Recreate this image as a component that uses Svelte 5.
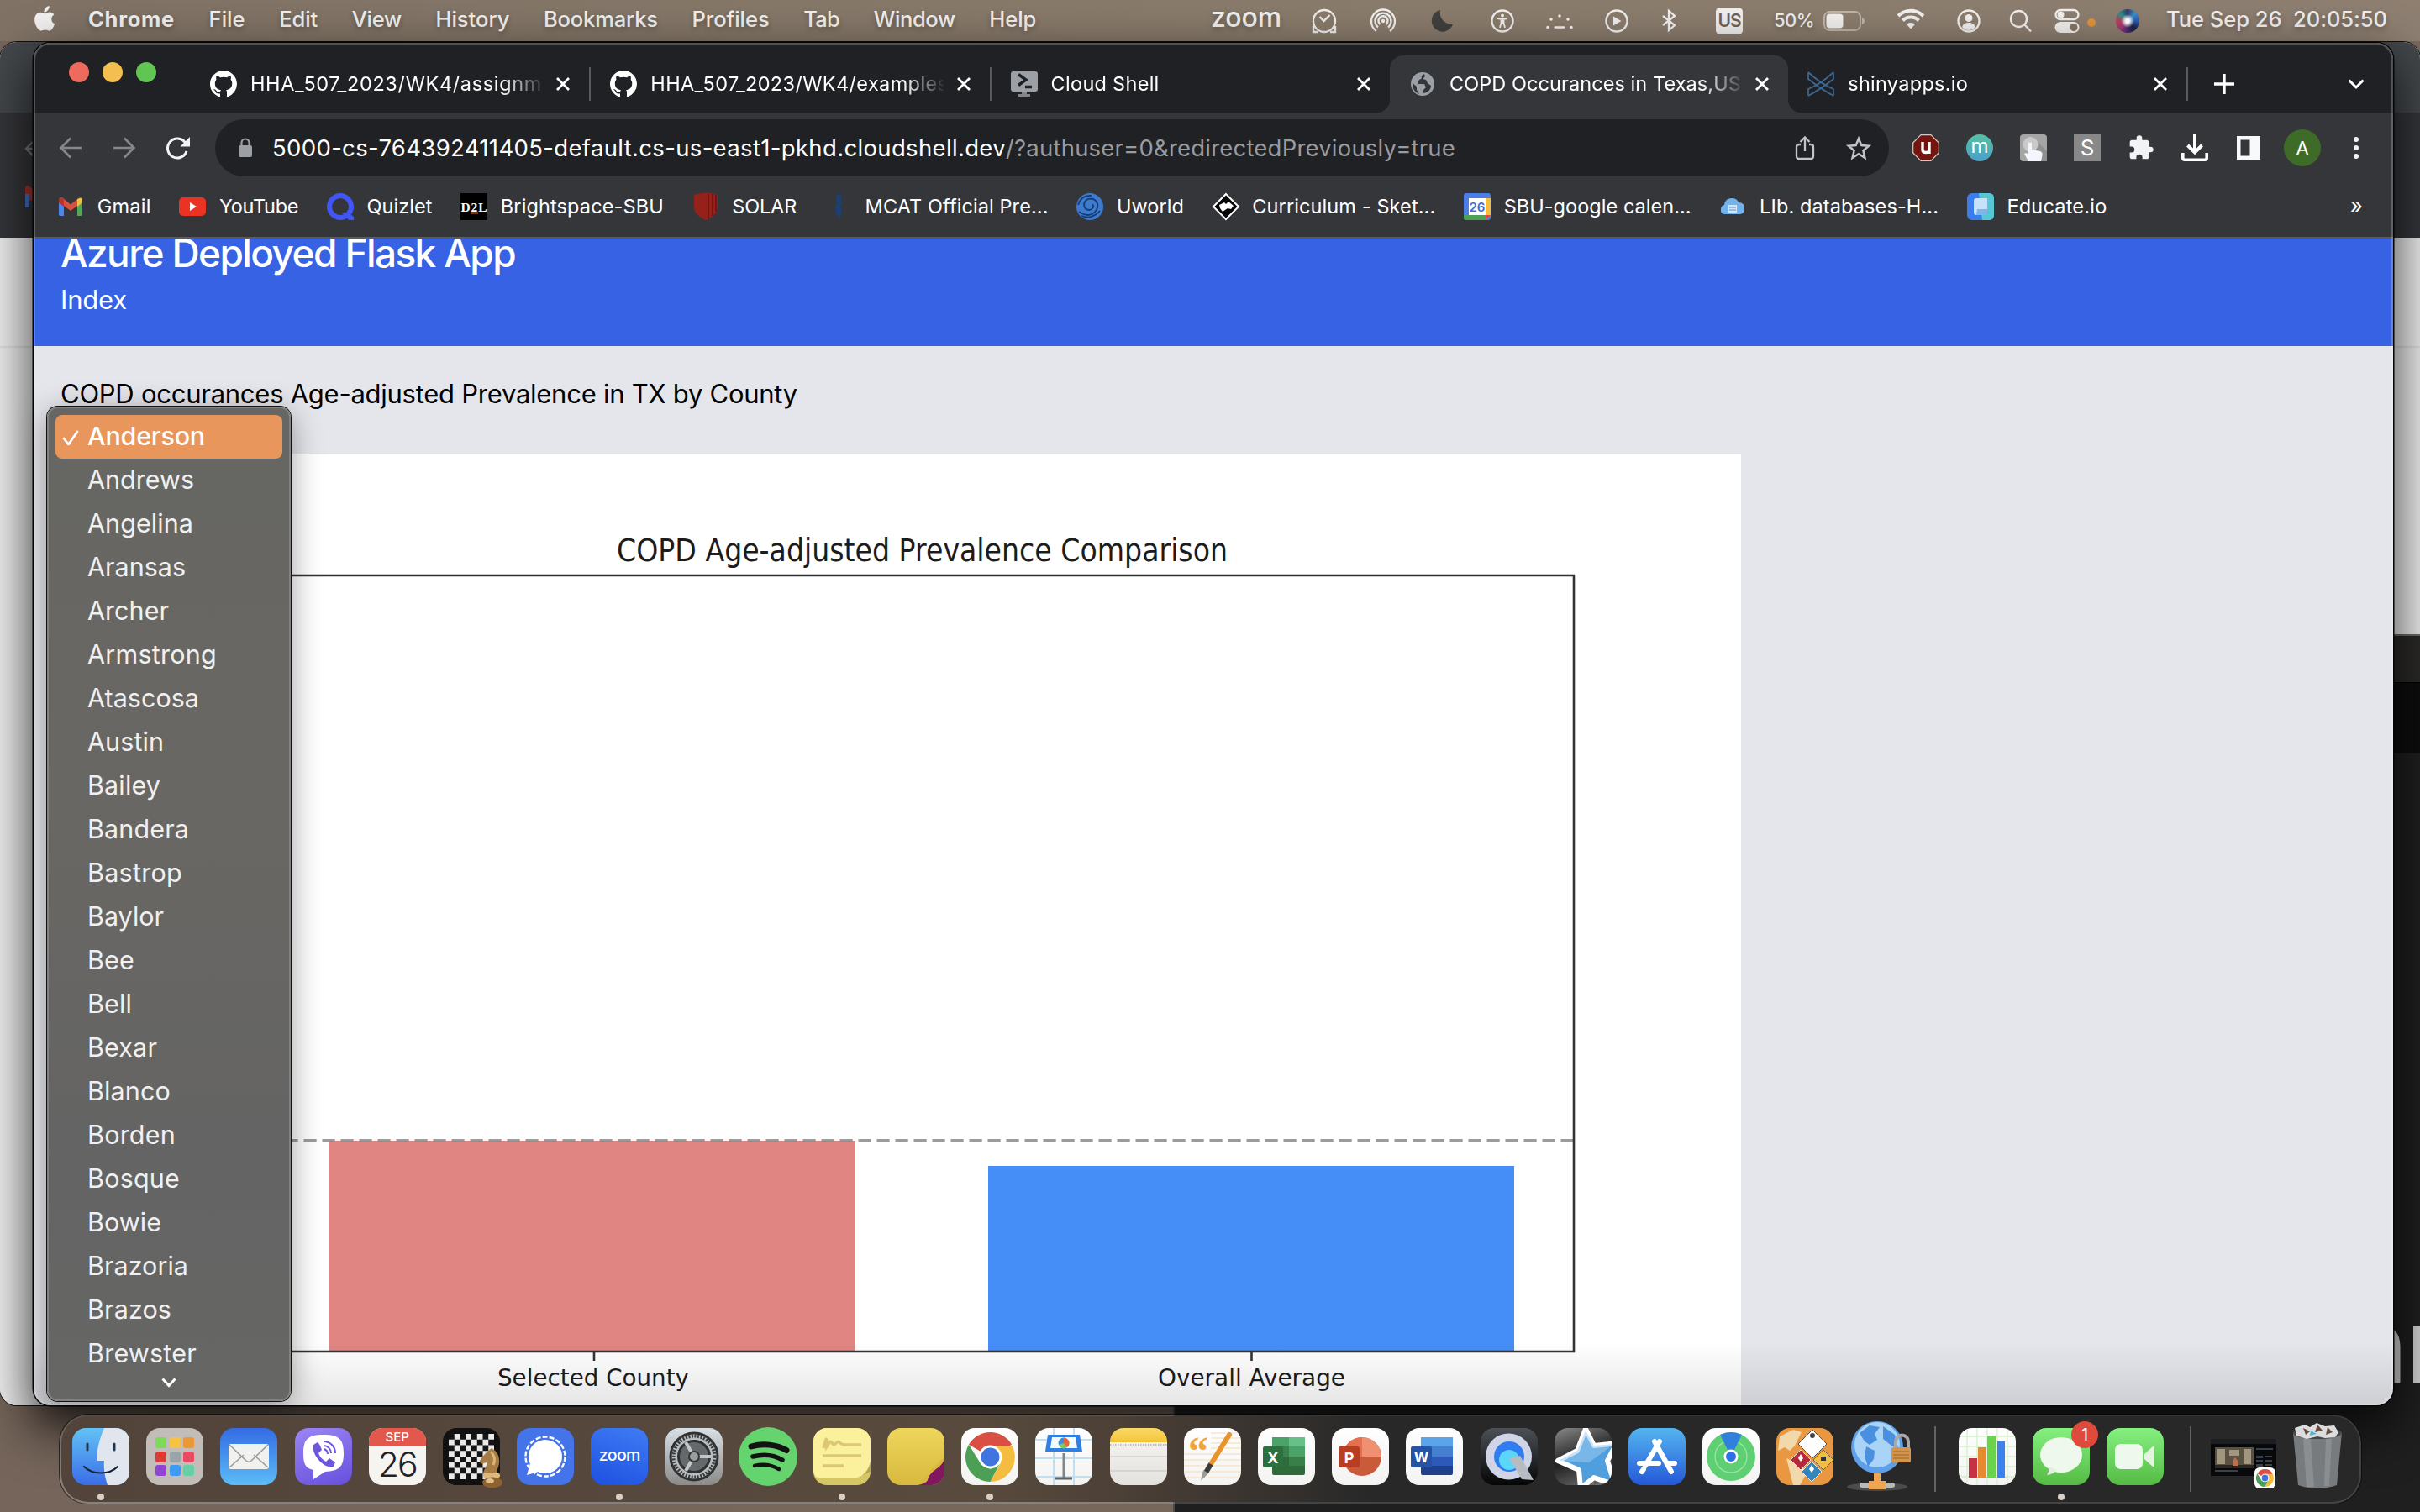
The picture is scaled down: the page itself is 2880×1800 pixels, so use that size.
<script>
  // Tracks a label out (or in) so that it takes exactly `width` pixels.
  function fit(node, width) {
    const natural = node.getBoundingClientRect().width;
    const count = node.textContent.length;
    node.style.letterSpacing = `${(width - natural) / count}px`;
  }

  const menus = [
    ['File', 43], ['Edit', 46], ['View', 59], ['History', 88], ['Bookmarks', 136],
    ['Profiles', 92], ['Tab', 43], ['Window', 97], ['Help', 56]
  ];

  const counties = [
    ['Anderson', 140], ['Andrews', 127], ['Angelina', 126], ['Aransas', 117], ['Archer', 97],
    ['Armstrong', 154], ['Atascosa', 133], ['Austin', 91], ['Bailey', 87], ['Bandera', 121],
    ['Bastrop', 113], ['Baylor', 91], ['Bee', 56], ['Bell', 53], ['Bexar', 83], ['Blanco', 99],
    ['Borden', 105], ['Bosque', 110], ['Bowie', 88], ['Brazoria', 120], ['Brazos', 100],
    ['Brewster', 130]
  ];
</script>

{#snippet github()}
  <svg class="i32" viewBox="0 0 16 16"><path fill="#fff" d="M8 0C3.58 0 0 3.58 0 8c0 3.54 2.29 6.53 5.47 7.59.4.07.55-.17.55-.38 0-.19-.01-.82-.01-1.49-2.01.37-2.53-.49-2.69-.94-.09-.23-.48-.94-.82-1.13-.28-.15-.68-.52-.01-.53.63-.01 1.08.58 1.23.82.72 1.21 1.87.87 2.33.66.07-.52.28-.87.51-1.07-1.78-.2-3.64-.89-3.64-3.95 0-.87.31-1.59.82-2.15-.08-.2-.36-1.02.08-2.12 0 0 .67-.21 2.2.82.64-.18 1.32-.27 2-.27s1.36.09 2 .27c1.53-1.04 2.2-.82 2.2-.82.44 1.1.16 1.92.08 2.12.51.56.82 1.27.82 2.15 0 3.07-1.87 3.75-3.65 3.95.29.25.54.73.54 1.48 0 1.07-.01 1.93-.01 2.2 0 .21.15.46.55.38A8.01 8.01 0 0 0 16 8c0-4.42-3.58-8-8-8z"/></svg>
{/snippet}
{#snippet shell()}
  <svg class="i32" viewBox="0 0 32 32"><rect x="0" y="1" width="32" height="24" rx="3" fill="#9aa0a6"/><path d="M9 4.500l9 6.500-9 6.500M17 19.500h8" stroke="#202124" stroke-width="3.400" fill="none"/><path d="M13 25h6v3h4v3H9v-3h4z" fill="#80868b"/></svg>
{/snippet}
{#snippet globe()}
  <svg class="i32" viewBox="0 0 32 32"><circle cx="16" cy="16" r="14" fill="#9aa0a6"/><path d="M18 4c-3 1-4 3-3 5l-4 3v4h7l2 4-3 3v4c6-1 9-5 9-9l-4-3-2-4-4-1 3-3zM4 15l5 4v4l3 5C7 26 4 22 4 15z" fill="#35363a"/></svg>
{/snippet}
{#snippet shiny()}
  <svg class="i32" viewBox="0 0 32 32"><g fill="none" stroke="#3c6790" stroke-width="1.800"><path d="M1 2v8q15 12 30 20M31 2v8Q16 22 1 30M1 2q15 14 30 20v8M31 2Q16 16 1 22v8"/></g></svg>
{/snippet}
{#snippet cross()}
  <svg class="close" viewBox="0 0 16 16"><path d="M1 1l14 14M15 1L1 15" stroke="#fff" stroke-width="2.800"/></svg>
{/snippet}
{#snippet chromeLogo()}
  <svg viewBox="0 0 48 48"><path d="M24 24L3.200 12A24 24 0 0 1 44.800 12z" fill="#d94f43"/><path d="M24 13h21.200a24 24 0 0 1-21.200 35l10-18z" fill="#f4bd40"/><path d="M3.200 12L14.500 30l9.500 5.500L33 31 24 48A24 24 0 0 1 3.200 12z" fill="#4d9f55"/><circle cx="24" cy="24" r="11.300" fill="#fff"/><circle cx="24" cy="24" r="8.900" fill="#4274e0"/></svg>
{/snippet}

{#snippet finder()}
  <div class="app b-finder"><svg viewBox="0 0 68 68"><path d="M38 0c-6 14-9 26-9 39h9c-1 10 1 20 4 29h26V0z" fill="#e1e6ee"/><path d="M18 19v7M50 19v7" stroke="#22364d" stroke-width="3" stroke-linecap="round"/><path d="M14 46c10 10 30 10 40 0" stroke="#17243a" stroke-width="2.200" fill="none" stroke-linecap="round"/></svg></div>
{/snippet}
{#snippet launchpad()}
  <div class="app b-launch">
    {#each ['#7edb58', '#f6c342', '#ec9836', '#dc3c31', '#9ba4a9', '#e94b60', '#9243d3', '#3e9bf2', '#67cfa4'] as c}<i style:background={c}></i>{/each}
  </div>
{/snippet}
{#snippet mail()}
  <div class="app b-mail"><svg viewBox="0 0 68 68"><rect x="10" y="19" width="48" height="30" rx="3" fill="#f1f1ef"/><path d="M11 47l17-15M57 47L40 32M11 20l20 19q3 2.500 6 0l20-19" stroke="#9a9a98" stroke-width="1.600" fill="none"/></svg></div>
{/snippet}
{#snippet viber()}
  <div class="app b-viber"><svg viewBox="0 0 68 68"><path d="M34 8c18 0 24 5 24 22s-6 21-22 22L22 61V50C12 48 10 42 10 30 10 13 16 8 34 8z" fill="#fff"/><path d="M22 20l5-3q2 1 5 9l-4 4c2 5 5 8 9 10l4-4 7 5-2 5c-10 4-27-14-24-26z" fill="#6d57da"/><path d="M34 16c8 0 14 6 14 14M34 21c5 0 9 4 9 9M34 25q5 1 5 6" fill="none" stroke="#6d57da" stroke-width="2"/></svg></div>
{/snippet}
{#snippet calendar()}
  <div class="app b-cal"><div class="month">SEP</div><div class="day">26</div></div>
{/snippet}
{#snippet chess()}
  <div class="app b-chess"><div class="board"></div><svg class="over" viewBox="0 0 68 68"><path d="M58 24c-4 3-10 8-14 15l1 4 7-2c1 6-4 8-4 14h16c0-6 4-10 3-18-1-7-4-10-9-13z" fill="#a67b45"/><path d="M57 28c4 4 6 10 3 16" stroke="#dcb676" stroke-width="3" fill="none"/><rect x="48" y="54" width="20" height="5" rx="2" fill="#dfb97a"/><ellipse cx="59" cy="65" rx="12" ry="6.500" fill="#8d6230"/><ellipse cx="56" cy="63" rx="5" ry="3" fill="#e2c08a"/></svg></div>
{/snippet}
{#snippet signal()}
  <div class="app b-signal"><svg viewBox="0 0 68 68"><circle cx="34" cy="34" r="23.500" fill="none" stroke="#fff" stroke-width="2.400" stroke-dasharray="6 2.200"/><circle cx="34" cy="34" r="20" fill="#fff"/><path d="M16 42l-4 14 14-4z" fill="#fff"/></svg></div>
{/snippet}
{#snippet zoom()}
  <div class="app b-zoom"><span use:fit={49}>zoom</span></div>
{/snippet}
{#snippet settings()}
  <div class="app b-set"><svg viewBox="0 0 68 68"><circle cx="34" cy="34" r="28" fill="#b9bdbf" stroke="#2f3132" stroke-width="3"/><circle cx="34" cy="34" r="24.500" fill="none" stroke="#3a3c3d" stroke-width="4" stroke-dasharray="2 1.600"/><circle cx="34" cy="34" r="18.500" fill="#66696b" stroke="#2f3132" stroke-width="3"/><path d="M34 34L24 17M34 34h20M34 34L24 51" stroke="#c3c7c9" stroke-width="4"/><circle cx="34" cy="34" r="6" fill="#9a9ea0" stroke="#333" stroke-width="2"/></svg></div>
{/snippet}
{#snippet spotify()}
  <div class="app"><svg viewBox="0 0 68 68"><circle cx="34" cy="34" r="35" fill="#65d46e"/><g fill="none" stroke="#121212" stroke-linecap="round"><path d="M14 22c14-4 30-2.500 42 4.500" stroke-width="7"/><path d="M16 34c12-3 25-2 35 4" stroke-width="5.500"/><path d="M18 45c10-2.500 20-1.500 29 4" stroke-width="4.500"/></g></svg></div>
{/snippet}
{#snippet stickies()}
  <div class="app b-stick"><svg viewBox="0 0 68 68"><path d="M0 0h68v40q-3 14-16 20H10Q0 60 0 50z" fill="#fbf19d"/><path d="M68 40q-3 16-18 20l18-8z" fill="#b5a552"/><path d="M12 24c4-16 4-12 4-2 4-6 4-8 7-3 3 4 4-5 8-2 3 4 6 3 26 3M11 33h46M11 45h25" fill="none" stroke="#dac873" stroke-width="3.500"/></svg></div>
{/snippet}
{#snippet note()}
  <div class="app b-note"><svg viewBox="0 0 68 68"><path d="M68 36C64 50 52 48 48 62q-2 4-12 6h32z" fill="#80175f"/><path d="M68 34C64 50 52 48 48 60q-2 6-14 8 14-8 18-19 5-3 16-15z" fill="#d8b840"/></svg></div>
{/snippet}
{#snippet chrome()}
  <div class="app b-white"><div class="logo58">{@render chromeLogo()}</div></div>
{/snippet}
{#snippet keynote()}
  <div class="app b-white"><svg viewBox="0 0 68 68"><path d="M0 14h68M0 36h68M0 58h68M22 0v68M46 0v68" stroke="#bfe0f3" stroke-width="2"/><path d="M15 8h38l3 20H12z" fill="#2f7fe4"/><path d="M20 11h28l2 13H18z" fill="#f5f9fc"/><circle cx="34" cy="18" r="6.500" fill="#86c552"/><path d="M34 18v-6.500a6.500 6.500 0 0 1 4 11.500z" fill="#e5673e"/><path d="M34 18v-6.500a6.500 6.500 0 0 0-6 8z" fill="#3b8de8"/><path d="M34 30v29" stroke="#82878c" stroke-width="3"/><path d="M24 60h20" stroke="#5e6368" stroke-width="3"/></svg></div>
{/snippet}
{#snippet notes()}
  <div class="app b-notes"><svg viewBox="0 0 68 68"><path d="M0 20h68" stroke="#8e8a80" stroke-width="1" stroke-dasharray="1.500 1.500"/><path d="M0 34h68M0 51h68" stroke="#cfcfcb" stroke-width="1.500"/></svg></div>
{/snippet}
{#snippet pages()}
  <div class="app b-white"><svg viewBox="0 0 68 68"><path d="M32 6h36M32 12h36M32 18h36M32 24h36M0 31h68M0 38h68M0 45h68M0 52h68M0 59h68" stroke="#f6d9b2" stroke-width="1.200"/><text x="5" y="44" font-size="48" font-family="Liberation Serif, serif" font-weight="700" fill="#f2a43c">“</text><path d="M54 8L32 43" stroke="#e8932c" stroke-width="6" stroke-linecap="round"/><path d="M32 43l-6 10" stroke="#3c3c3c" stroke-width="6"/><path d="M23 50l6 4-9 9z" fill="#9b9b9b"/></svg></div>
{/snippet}
{#snippet excel()}
  <div class="app b-white"><svg viewBox="0 0 68 68"><rect x="17" y="11" width="39" height="45" rx="2" fill="#2f6a3b"/><path d="M17 11h20v11H17z" fill="#4ca369"/><path d="M37 11h19v11H37z" fill="#66c088"/><path d="M17 22h20v12H17z" fill="#3b8150"/><path d="M37 22h19v12H37z" fill="#4ca369"/><path d="M37 34h19v11H37z" fill="#397f4a"/><rect x="6" y="22" width="24" height="25" rx="2" fill="#2c7040"/><text x="18" y="41.500" text-anchor="middle" font-size="18" font-weight="700" fill="#fff">X</text></svg></div>
{/snippet}
{#snippet powerpoint()}
  <div class="app b-white"><svg viewBox="0 0 68 68"><circle cx="36" cy="34" r="23" fill="#c95a3a"/><path d="M36 11a23 23 0 0 1 23 23H36z" fill="#ef9072"/><path d="M36 11a23 23 0 0 0-23 23h23z" fill="#e4704f"/><rect x="8" y="22" width="25" height="25" rx="2" fill="#b73e23"/><text x="20.500" y="41.500" text-anchor="middle" font-size="18" font-weight="700" fill="#fff">P</text></svg></div>
{/snippet}
{#snippet word()}
  <div class="app b-white"><svg viewBox="0 0 68 68"><rect x="18" y="11" width="38" height="45" rx="2" fill="#21408b"/><path d="M18 11h38v11H18z" fill="#5ba4ea"/><path d="M18 22h38v12H18z" fill="#4580d0"/><path d="M18 34h38v11H18z" fill="#2d5ab8"/><rect x="6" y="22" width="25" height="25" rx="2" fill="#2453a8"/><text x="18.500" y="41" text-anchor="middle" font-size="17" font-weight="700" fill="#fff">W</text></svg></div>
{/snippet}
{#snippet quicktime()}
  <div class="app b-qt"><svg viewBox="0 0 68 68"><circle cx="33.500" cy="34" r="27.500" fill="#cfd5e6"/><circle cx="34" cy="34" r="18" fill="#2f7df0"/><circle cx="34" cy="38" r="12" fill="#5ad6f8"/><path d="M34 36l13-3 16 29-14-1z" fill="#b7bbc2"/></svg></div>
{/snippet}
{#snippet anki()}
  <div class="app b-anki"><svg viewBox="0 0 68 68"><path d="M37 1l10 20 27-3-11 21 9 29-25-9-16 13-2-22L4 39l23-12z" fill="#4f9fde" stroke="#fff" stroke-width="6" stroke-linejoin="round"/><path d="M37 3l10 18 24-2-30 22-36-2 22-12z" fill="#9ccbf0" opacity=".55"/></svg></div>
{/snippet}
{#snippet appstore()}
  <div class="app b-store"><svg viewBox="0 0 68 68"><g stroke="#fff" stroke-width="6" stroke-linecap="round"><path d="M37 16L20 45M31 16l20 36M13 42h23M47 42h8M18 49l-2 3"/></g></svg></div>
{/snippet}
{#snippet findmy()}
  <div class="app b-white"><svg viewBox="0 0 68 68"><circle cx="34" cy="34" r="29" fill="#5fcf73"/><circle cx="34" cy="34" r="19" fill="none" stroke="#98e6a4" stroke-width="1.300"/><path d="M34 34L21 8q13-6 26 0z" fill="#2f81dc"/><circle cx="34" cy="34" r="8.500" fill="#fff"/><circle cx="34" cy="34" r="6" fill="#2f6fe8"/></svg></div>
{/snippet}
{#snippet hazmat()}
  <div class="app b-haz"><svg viewBox="0 0 68 68"><path d="M4 10l16-8 10 3-8 16-6 6-6-4-8 4zM12 36l18 8 6 10-8 14H20z" fill="#f2d9ab"/><path d="M43 2l17 17-17 17-17-17z" fill="#fdfdfd" stroke="#555"/><path d="M29 26l12 12-12 12-12-12z" fill="#b52a3a" stroke="#fff" stroke-width=".8"/><path d="M56 26l12 12-12 12-12-12z" fill="#f0bd47" stroke="#555" stroke-width=".8"/><path d="M42 40l12 12-12 12-12-12z" fill="#3585bc" stroke="#fff" stroke-width=".8"/><circle cx="43" cy="9" r="3" fill="#444"/><path d="M29 31l3 5-3 4-3-4zM42 44l3 5-3 4-3-4z" fill="#fff"/><path d="M53 34h6v5h-6z" fill="#333"/></svg></div>
{/snippet}
{#snippet vpn()}
  <div class="app"><svg viewBox="0 0 68 68"><ellipse cx="31" cy="70" rx="36" ry="5" fill="#777" opacity=".45"/><circle cx="31" cy="23" r="31" fill="#5d9fe8"/><circle cx="31" cy="20" r="27" fill="#a9d4f8"/><path d="M10 6l12-9 12 2-6 8 3 7-9 6-6-4zM18 22l10 5-1 10-7 9-4-12zM38-2l14 10 4 16-8-3-10-8z" fill="#4a90e0"/><rect x="10" y="65" width="42" height="6" rx="3" fill="#b9b9b9"/><path d="M27 54h8v9h6v10H21V63h6z" fill="#f2a550"/><path d="M53 24v-8a7.500 7.500 0 0 1 15 0v8" fill="none" stroke="#a9a9a9" stroke-width="4"/><rect x="48" y="23" width="23" height="18" rx="2" fill="#d3954c"/><path d="M50 28h19M50 32h19M50 36h19" stroke="#9b6526"/></svg></div>
{/snippet}
{#snippet numbers()}
  <div class="app b-white"><svg viewBox="0 0 68 68"><path d="M0 10h68M0 22h68M0 34h68M0 46h68M0 58h68M10 0v68M22 0v68M34 0v68M46 0v68M58 0v68" stroke="#d3f0cb" stroke-width="1.300"/><path d="M12 36h10v23H12z" fill="#c43344"/><path d="M23 23h10v36H23z" fill="#e58a31"/><path d="M34 9h10v50H34z" fill="#69d34b"/><path d="M46 16h9v43h-9z" fill="#3d82ea"/></svg></div>
{/snippet}
{#snippet messages()}
  <div class="app b-green"><svg viewBox="0 0 68 68"><ellipse cx="34" cy="32" rx="25" ry="21" fill="#eef8ec"/><path d="M19 46q1 6-2 10 8-1 12-6z" fill="#dff2dc"/></svg><b class="badge">1</b></div>
{/snippet}
{#snippet facetime()}
  <div class="app b-green"><svg viewBox="0 0 68 68"><rect x="10" y="19" width="33" height="30" rx="7" fill="#eef8ec"/><path d="M45 31l10-9q2-1 2 1v22q0 2-2 1l-10-9z" fill="#e3f4e0"/></svg></div>
{/snippet}

<div class="desktop">
  <div class="window back"><div class="b-tabs"></div><div class="b-bar">
    <svg viewBox="0 0 40 148"><path d="M44 43H32m8-9l-9 9 9 9" fill="none" stroke="#77787b" stroke-width="2.400"/><path d="M30 104V90q1-8 10 3v12z" fill="#a8332b"/><path d="M30 97h5v16h-5z" fill="#4672c4"/></svg>
  </div><div class="b-page"></div></div>
  <div class="window terminal"><div class="t-title"></div><div class="t-tabs"></div><div class="t-body"><span>nr</span></div></div>

  <header class="menubar">
    <svg class="apple" viewBox="0 0 24 30"><path fill="#f2f0ee" d="M17.500 0c.2 2-.7 3.900-1.800 5.200-1.100 1.400-2.700 2.300-4.200 2.200-.3-1.900.6-3.800 1.700-5C14.300 1.100 16.100.1 17.500 0zM23 10.200c-2 1.300-3 2.900-3 5.100 0 2.500 1.500 4.500 3.700 5.400-.9 2.700-3.500 8-6.200 8-1.600 0-2.400-1-4.700-1s-3.200 1-4.700 1C4.800 28.700.5 21.700.5 16c0-5.500 3.400-8.500 6.800-8.500 2.200 0 3.800 1.400 5.200 1.400 1.300 0 3.300-1.600 5.800-1.600 1.800 0 3.600.9 4.700 2.900z"/></svg>
    <nav>
      <b use:fit={103}>Chrome</b>
      {#each menus as [name, w]}<span use:fit={w}>{name}</span>{/each}
    </nav>
    <div class="status">
      <span class="zoomword"><span use:fit={84}>zoom</span></span>
      <svg viewBox="0 0 30 30"><circle cx="15" cy="15" r="13" class="ln"/><path d="M9.500 10l5 5 7-7M2 21v7h6M28 21v7h-6" class="ln"/></svg>
      <svg viewBox="0 0 30 30"><g class="ln"><path d="M7 27A14 14 0 1 1 23 27M9 22.500a9.500 9.500 0 1 1 12 0M11.500 19a5.500 5.500 0 1 1 7 0"/></g><circle cx="15" cy="15" r="2.200" class="fl"/></svg>
      <svg viewBox="0 0 30 30"><path d="M12 2a14 14 0 0 0 15 17A13 13 0 1 1 12 2z" fill="#40403f"/></svg>
      <svg viewBox="0 0 30 30"><circle cx="15" cy="15" r="12.500" class="ln"/><circle cx="15" cy="8.500" r="1.900" class="fl"/><path d="M9 12l6 1 6-1M15 13v5m-3 5l1.500-6V13h3v4l1.500 6" class="ln thin"/></svg>
      <svg viewBox="0 0 30 30"><g class="fl"><circle cx="15" cy="9" r="1.800"/><circle cx="5" cy="13" r="1.800"/><circle cx="25" cy="13" r="1.800"/><circle cx="1" cy="22.500" r="1.800"/><circle cx="29" cy="22.500" r="1.800"/><rect x="8.500" y="21.200" width="13" height="2.600" rx="1.300"/></g></svg>
      <svg viewBox="0 0 30 30"><circle cx="15" cy="15" r="12.500" class="ln"/><path d="M11 9.500v11l9.500-5.500z" class="fl"/></svg>
      <svg viewBox="0 0 30 30"><path d="M8 9l14 11-7 6V3l7 6L8 20" class="ln"/></svg>
      <span class="us">US</span>
      <span class="pct"><span use:fit={48}>50%</span></span>
      <svg class="batt" viewBox="0 0 50 24"><rect x="1" y="1" width="43" height="22" rx="6.500" fill="none" stroke="#bdb4aa" stroke-width="2"/><rect x="3.500" y="3.500" width="20" height="17" rx="4" class="fl"/><path d="M46 8q3 1 3 4t-3 4z" fill="#bdb4aa"/></svg>
      <svg class="wifi" viewBox="0 0 34 26"><path d="M2 9a21 21 0 0 1 30 0M7.500 14.500a13.500 13.500 0 0 1 19 0" fill="none" stroke="#f2f0ee" stroke-width="4"/><path d="M12 19a7 7 0 0 1 10 0l-5 5.500z" class="fl"/></svg>
      <svg viewBox="0 0 30 30"><circle cx="15" cy="15" r="12.500" class="ln"/><circle cx="15" cy="11.500" r="4.500" class="fl"/><path d="M7 22q2-5 8-5t8 5q-3 4-8 4t-8-4z" class="fl"/></svg>
      <svg viewBox="0 0 30 30"><circle cx="12.500" cy="12.500" r="9.500" class="ln"/><path d="M19.500 19.500l7.500 8" class="ln"/></svg>
      <svg viewBox="0 0 30 30"><rect x="1.500" y="2" width="27" height="11" rx="5.500" class="ln"/><circle cx="7.500" cy="7.500" r="4" class="fl"/><rect x="0.500" y="16" width="29" height="13" rx="6.500" class="fl"/><circle cx="23" cy="22.500" r="4.500" fill="#857767"/></svg>
      <i class="orange"></i>
      <i class="siri"></i>
      <span class="date"><span use:fit={263}>Tue Sep 26  20:05:50</span></span>
    </div>
  </header>

  <main class="window front">
    <div class="tabstrip">
      <div class="lights"><i class="r"></i><i class="y"></i><i class="g"></i></div>
      <div class="tab">{@render github()}<div class="title"><span use:fit={347}>HHA_507_2023/WK4/assignm</span></div>{@render cross()}</div>
      <i class="sep"></i>
      <div class="tab">{@render github()}<div class="title"><span use:fit={354}>HHA_507_2023/WK4/examples</span></div>{@render cross()}</div>
      <i class="sep"></i>
      <div class="tab">{@render shell()}<div class="title"><span use:fit={129}>Cloud Shell</span></div>{@render cross()}</div>
      <div class="tab active">{@render globe()}<div class="title"><span use:fit={347}>COPD Occurances in Texas,US</span></div>{@render cross()}</div>
      <div class="tab">{@render shiny()}<div class="title"><span use:fit={143}>shinyapps.io</span></div>{@render cross()}</div>
      <i class="sep"></i>
      <svg class="plus" viewBox="0 0 24 24"><path d="M12 0v24M0 12h24" stroke="#fff" stroke-width="3.400"/></svg>
      <svg class="chev" viewBox="0 0 20 12"><path d="M1.500 1.500L10 10l8.500-8.500" fill="none" stroke="#fff" stroke-width="3"/></svg>
    </div>

    <div class="toolbar">
      <svg class="i32" viewBox="0 0 32 32"><path d="M29 16H4M16 4.500L4.500 16 16 27.500" fill="none" stroke="#86878a" stroke-width="2.600"/></svg>
      <svg class="i32" viewBox="0 0 32 32"><path d="M3 16h25M16 4.500L27.500 16 16 27.500" fill="none" stroke="#86878a" stroke-width="2.600"/></svg>
      <svg class="i32" viewBox="0 0 32 32"><path d="M26 20a11.500 11.500 0 1 1-1.500-10" fill="none" stroke="#f1f3f4" stroke-width="3"/><path d="M30 3v11.500H18.500z" fill="#f1f3f4"/></svg>
      <div class="omnibox">
        <svg class="i32" viewBox="0 0 32 32"><rect x="8" y="13" width="16" height="14" rx="2" fill="#9aa0a6"/><path d="M11.500 14v-4a4.500 4.500 0 0 1 9 0v4" fill="none" stroke="#9aa0a6" stroke-width="2.200"/></svg>
        <div class="url"><span use:fit={873}>5000-cs-764392411405-default.cs-us-east1-pkhd.cloudshell.dev</span><span class="path" use:fit={535}>/?authuser=0&redirectedPreviously=true</span></div>
        <svg class="i32" viewBox="0 0 32 32"><path d="M11 12H9q-3 0-3 3v11q0 3 3 3h14q3 0 3-3V15q0-3-3-3h-2M16 20V4M10.500 9L16 3.500 21.500 9" fill="none" stroke="#c3c5c7" stroke-width="2.300"/></svg>
        <svg class="i32" viewBox="0 0 32 32"><path d="M16 5l3.300 8 8.700.7-6.600 5.600 2 8.500L16 23.300l-7.400 4.500 2-8.500L4 13.700l8.700-.7z" fill="none" stroke="#c3c5c7" stroke-width="2.500"/></svg>
      </div>
      <svg class="i32 first-ext" viewBox="0 0 32 32"><path d="M10 .7h12L31.300 10v12L22 31.300H10L.7 22V10z" fill="#75150f" stroke="#d8c9c8" stroke-width="1.200"/><path d="M12 9v9.500q0 3 4 3t4-3V9M20 17v6" fill="none" stroke="#fff" stroke-width="3.400"/></svg>
      <div class="ext m">m</div>
      <svg class="i32" viewBox="0 0 32 32"><rect width="32" height="32" rx="4" fill="#a5a5a5"/><path d="M16 4l16 16v12H14z" fill="#8f8f8f"/><circle cx="12.500" cy="12" r="9" fill="#c9c9c9"/><path d="M10 10.500q2-2 4 0V18l10 2q3 1 2.500 5L25 32H10l-5-9q3-2 5 1z" fill="#f3f7fd"/></svg>
      <div class="ext s">S</div>
      <svg class="i32" viewBox="0 0 24 24"><path fill="#f1f3f4" d="M20.500 11H19V7a2 2 0 0 0-2-2h-4V3.500a2.500 2.500 0 0 0-5 0V5H4a2 2 0 0 0-2 2v3.800h1.500a2.700 2.700 0 0 1 0 5.400H2V20c0 1.100.9 2 2 2h3.800v-1.500a2.700 2.700 0 0 1 5.400 0V22H17a2 2 0 0 0 2-2v-4h1.500a2.500 2.500 0 0 0 0-5z"/></svg>
      <svg class="i32" viewBox="0 0 32 32"><path d="M16 0v21M7.500 13l8.500 8.500 8.500-8.500" fill="none" stroke="#fff" stroke-width="4"/><path d="M1.800 22v6q0 2.200 2.200 2.200h24q2.200 0 2.200-2.200v-6" fill="none" stroke="#fff" stroke-width="3.600"/></svg>
      <svg class="i32" viewBox="0 0 32 32"><path d="M2 2h28v28H2zM6.500 6.500v19h11v-19z" fill-rule="evenodd" fill="#f8f9fa"/></svg>
      <div class="avatar">A</div>
      <svg class="i32" viewBox="0 0 32 32"><g fill="#f1f3f4"><circle cx="16" cy="6" r="3"/><circle cx="16" cy="16" r="3"/><circle cx="16" cy="26" r="3"/></g></svg>
    </div>

    <div class="bookmarks">
      <div><svg class="i32" viewBox="0 0 32 32"><path d="M2 9v16q0 2 2 2h4V13z" fill="#4d86ec"/><path d="M30 9v16q0 2-2 2h-4V13z" fill="#56a65a"/><path d="M2 9q0-4 4-4l10 8.500L24 7v8l-8 6-8-6-6-4z" fill="#d9503f"/><path d="M24 7q6-4 6 2v2l-6 5z" fill="#f2be42"/><path d="M2 11V8q1-5 6-1v9z" fill="#b8352b"/></svg><span use:fit={64}>Gmail</span></div>
      <div><svg class="i32" viewBox="0 0 32 32"><rect y="5" width="32" height="22" rx="5" fill="#ea3323"/><path d="M13 11v10l8-5z" fill="#fff"/></svg><span use:fit={94}>YouTube</span></div>
      <div><svg class="i32" viewBox="0 0 32 32"><circle cx="16" cy="16" r="13" fill="none" stroke="#4255f5" stroke-width="6"/><path d="M18 23h7l7 5v4h-6z" fill="#4255f5"/></svg><span use:fit={78}>Quizlet</span></div>
      <div><svg class="i32" viewBox="0 0 32 32"><rect width="32" height="32"/><text x="16" y="22" text-anchor="middle" font-size="15.500" textLength="31" font-family="Liberation Serif, serif" font-weight="700" fill="#fff">D2L</text><path d="M12 23.500h9" stroke="#e07b35" stroke-width="2"/></svg><span use:fit={194}>Brightspace-SBU</span></div>
      <div><svg class="i32" viewBox="0 0 32 32"><path d="M2 2q14-5 28 0v15q0 9-14 15Q2 26 2 17z" fill="#96201a"/><path d="M19 1v29M24 1v26M28 2v20" stroke="#6d100d" stroke-width="1.500"/></svg><span use:fit={77}>SOLAR</span></div>
      <div><svg class="i32" viewBox="0 0 32 32"><path d="M20 0q-8 1-7 6 2 5 0 9t0 9q2 5 5 8-1-5 1-8 2-5-1-9 4-3 1-8-1-4 1-7z" fill="#1c3f74"/></svg><span use:fit={218}>MCAT Official Pre...</span></div>
      <div><svg class="i32" viewBox="0 0 32 32"><circle cx="16" cy="16" r="16" fill="#3c7bd0"/><path d="M3 22q13 9 21-2 4-9-4-13-9-2-11 6 0 7 7 7 6-2 3-7M2 14Q6 2 18 3M6 27q12 5 22-6" fill="none" stroke="#173b6d" stroke-width="1.800"/></svg><span use:fit={80}>Uworld</span></div>
      <div><svg class="i32" viewBox="0 0 32 32"><path d="M16 1l15 15-15 15L1 16z" fill="#050505" stroke="#fff" stroke-width="2"/><path d="M8 14l6-3 2 2 3-3 6 5-3 4-4-1-6 4-3-4z" fill="#fff"/></svg><span use:fit={218}>Curriculum - Sket...</span></div>
      <div><svg class="i32" viewBox="0 0 32 32"><rect width="32" height="32" rx="3" fill="#4d7de8"/><path d="M0 26h26v6H3q-3 0-3-3z" fill="#4ea055"/><path d="M26 6h6v20h-6z" fill="#f2bd42"/><path d="M26 26h6l-6 6z" fill="#dc4c3e"/><rect x="6" y="6" width="20" height="20" fill="#fff"/><text x="16" y="21.500" text-anchor="middle" font-size="15" font-weight="600" fill="#3e6fd6">26</text></svg><span use:fit={223}>SBU-google calen...</span></div>
      <div><svg class="i32" viewBox="0 0 32 32"><path d="M6 25q-5-1-4-6 0-4 4-5 1-8 9-8 6 0 8 5 7 0 7 7 0 6-5 7z" fill="#71b3ea"/><path d="M11 14h10v9H11z" fill="#cfe5fa"/><path d="M12 17h8M12 20h8" stroke="#5795d2"/></svg><span use:fit={213}>LIb. databases-H...</span></div>
      <div><svg class="i32" viewBox="0 0 32 32"><rect width="32" height="32" rx="6" fill="#3b7dea"/><path d="M14 0h12q6 0 6 6v20q0 6-6 6h-8z" fill="#55c8d4"/><path d="M8 9q0-3 3-3h13v20H11q-3 0-3-3z" fill="#c5e2f8"/><path d="M12 19h12v7H11z" fill="#7db5ec"/></svg><span use:fit={119}>Educate.io</span></div>
      <span class="more">»</span>
    </div>

    <section class="page">
      <div class="hero">
        <h1 use:fit={541}>Azure Deployed Flask App</h1>
        <p use:fit={79}>Index</p>
      </div>
      <p class="lead" use:fit={877}>COPD occurances Age-adjusted Prevalence in TX by County</p>
      <svg class="chart" viewBox="72 540 2000 1134">
        <rect x="72" y="540" width="2000" height="1134" fill="#fff"/>
        <g font-family="DejaVu Sans, sans-serif" fill="#1c1c1c">
          <text x="734" y="668" font-size="36.500" textLength="727" lengthAdjust="spacingAndGlyphs">COPD Age-adjusted Prevalence Comparison</text>
          <text x="592" y="1649.500" font-size="28.500" textLength="228" lengthAdjust="spacingAndGlyphs">Selected County</text>
          <text x="1378" y="1649.500" font-size="28.500" textLength="223" lengthAdjust="spacingAndGlyphs">Overall Average</text>
        </g>
        <rect x="392" y="1358" width="626" height="251" fill="#e08581"/>
        <rect x="1176" y="1388" width="626" height="221" fill="#458ef7"/>
        <path d="M333 1358H1873" stroke="#8a8a8a" stroke-opacity=".85" stroke-width="4" stroke-dasharray="15.200 6.800" stroke-dashoffset="-6.500"/>
        <path d="M250 685H1873V1609H250zM707 1609v11M1489.500 1609v11" fill="none" stroke="#333" stroke-width="2.600"/>
      </svg>
      <div class="shade"></div>
    </section>
  </main>

  <ul class="dropdown">
    {#each counties as [name, w], i}
      <li class:on={i === 0}>
        {#if i === 0}<svg viewBox="0 0 20 20"><path d="M2 11l5.500 7L18 3" fill="none" stroke="#fff" stroke-width="2.800" stroke-linecap="round" stroke-linejoin="round"/></svg>{/if}
        <span use:fit={w}>{name}</span>
      </li>
    {/each}
    <svg class="down" viewBox="0 0 18 12"><path d="M1.500 1.500L9 9.500l7.500-8" fill="none" stroke="#fff" stroke-width="3"/></svg>
  </ul>

  <footer class="dock">
    {#each [[finder, 1], [launchpad], [mail], [viber], [calendar], [chess], [signal], [zoom, 1], [settings], [spotify], [stickies, 1], [note], [chrome, 1], [keynote], [notes], [pages], [excel], [powerpoint], [word], [quicktime], [anki], [appstore], [findmy], [hazmat], [vpn]] as [icon, run]}
      <div class="slot" class:run>{@render icon()}</div>
    {/each}
    <i class="bar"></i>
    {#each [[numbers], [messages, 1], [facetime]] as [icon, run]}
      <div class="slot" class:run>{@render icon()}</div>
    {/each}
    <i class="bar last"></i>
    <div class="mini">
      <svg viewBox="0 0 78 44"><rect width="78" height="44" fill="#08090b"/><path d="M0 0h78v6H0z" fill="#1d1e21"/><path d="M5 10h46v25H5z" fill="#5b5142"/><path d="M8 12h9v18H8zM39 12h9v18h-9zM22 13h12v7H22z" fill="#a1977f"/><path d="M5 31h46v4H5z" fill="#2c2620"/><path d="M26 26l3-4 3 4v6h-6z" fill="#c06f4c"/><path d="M54 11h20v2H54zM54 20h8v3h-8zM54 25h8v3h-8zM54 30h8v3h-8z" fill="#38404f"/><path d="M64 21h9M64 26h9M64 31h9M5 38h28" stroke="#778"/></svg>
      <div class="tiny">{@render chromeLogo()}</div>
    </div>
    <svg class="trash" viewBox="0 0 60 78"><path d="M1 10h58l-6 63q-23 8-46 0z" fill="#777b7e"/><path d="M13 18h9l4 57H17zM40 18h7l-3 56h-6z" fill="#9da1a4" opacity=".5"/><ellipse cx="30" cy="11" rx="29" ry="7" fill="#44484b"/><path d="M5 14L3 5l12-4 6 3 8-5 10 4 11-1 5 8-4 6-12 1-9-2-13 3z" fill="#dcdddf"/><path d="M13 5l8 4-5 4zM30 1l6 7-9 2zM42 4l6 6-8 3z" fill="#6a4a3c"/><path d="M22 8l7 4-8 2z" fill="#4bb5d4"/></svg>
  </footer>
</div>

<style>
  :global(body) { margin: 0; overflow: hidden; }
  .desktop { position: relative; width: 2880px; height: 1800px; overflow: hidden; background: linear-gradient(90deg, #75655a, #7a685b); font-family: Inter, 'Liberation Sans', sans-serif; }
  .desktop :global(svg) { display: block; overflow: visible; flex: none; }
  span, b, h1, p { white-space: pre; }
  i { display: block; flex: none; }

  /* stacked windows */
  .window { position: absolute; box-sizing: border-box; overflow: hidden; display: flex; flex-direction: column; }
  .back { left: 0; top: 50px; width: 2880px; height: 1623px; border-radius: 20px; background: #fff; box-shadow: 0 0 0 1px #111; }
  .b-tabs { height: 84px; background: #44484b; flex: none; }
  .b-bar { height: 149px; background: #35363a; flex: none; }
  .b-bar svg { width: 40px; height: 148px; }
  .b-page { flex: 1; background: linear-gradient(#f1f1f1 129px, #dcdcdc 129px, #f1f1f1 132px); }
  .terminal { left: 1396px; top: 755px; width: 1600px; height: 1100px; background: #1f1f1f; border-left: 2px solid #4a4a4a; border-top: 2px solid #6b6d6a; }
  .t-title { height: 55px; background: #2b2a28; border-bottom: 1px solid #000; }
  .t-tabs { height: 84px; background: #0d0d0d; }
  .t-body { position: relative; }
  .t-body span { position: absolute; left: 1389px; top: 629px; font-size: 124px; line-height: 150px; font-weight: 700; color: #d5d5d5; }
  .front { left: 40px; top: 51px; width: 2808px; height: 1622px; border-radius: 20px; background: #e5e6eb; box-shadow: 0 0 0 1.500px #050505, 0 24px 60px 6px rgba(0, 0, 0, 0.7); }
  .front::after { content: ''; position: absolute; inset: 0; border-radius: 20px; box-shadow: inset 0 0 0 2px rgba(255, 255, 255, 0.22); }

  /* menu bar */
  .menubar { position: relative; box-sizing: border-box; height: 49px; display: flex; align-items: center; padding-left: 40px; background: linear-gradient(90deg, #807265, #897b6b 50%, #8e7f71); color: #f2f0ee; font-size: 25.500px; text-shadow: 0 3px 6px rgba(0, 0, 0, 0.3); }
  .apple { width: 26px; height: 31px; margin-top: -5px; }
  nav { display: flex; gap: 40.600px; margin: -4px 0 0 39px; font-weight: 500; }
  nav b { font-weight: 700; }
  .status { position: absolute; left: 1441px; top: 0; height: 49px; display: grid; align-items: center; justify-items: center; font-weight: 500; grid-template-columns: 99px 72px 68px 73px 70px 66px 70px 54px 90px 63px 57px 102px 35px 90px 20px 38px 48px 324px; }
  .status svg { width: 30px; height: 30px; }
  .status .batt { width: 50px; height: 24px; }
  .status .wifi { width: 34px; height: 26px; margin-top: -4px; }
  .ln { fill: none; stroke: #f2f0ee; stroke-width: 2.300; }
  .ln.thin { stroke-width: 1.800; }
  .fl { fill: #f2f0ee; }
  .zoomword { justify-self: start; font-size: 32px; font-weight: 500; line-height: 40px; margin-top: -7px; }
  .us { width: 32px; height: 32px; border-radius: 5px; background: #f2f0ee; color: #6f6355; font-size: 21px; line-height: 32px; text-align: center; text-shadow: none; font-weight: 600; letter-spacing: -1px; }
  .pct { justify-self: start; margin: -1px 0 0 8px; font-size: 22px; }
  .orange { width: 10px; height: 10px; border-radius: 50%; background: #e0923d; margin-top: 4px; }
  .siri { width: 28px; height: 28px; border-radius: 50%; background: radial-gradient(circle, #fff 0 12%, transparent 40%), conic-gradient(#2a3f6c, #3d8ec9, #2b5ab0, #172146, #4a2a6f, #a23a77, #b8405a, #2f8f8b, #2a3f6c); }
  .date { justify-self: start; margin: -4px 0 0 22px; }

  /* tabs */
  .tabstrip { display: flex; align-items: center; height: 83px; background: #202124; flex: none; color: #fff; font-size: 23.500px; }
  .lights { display: flex; gap: 16px; width: 145px; padding: 0 0 14px 42px; box-sizing: content-box; }
  .lights i { width: 24px; height: 24px; border-radius: 50%; }
  .r { background: #ec6a5e; } .y { background: #f4bf4f; } .g { background: #61c554; }
  .tab { position: relative; box-sizing: border-box; width: 474.300px; height: 68px; margin-top: 15px; padding: 0 23px 0 23px; display: flex; align-items: center; gap: 16px; }
  .tab.active { background: #35363a; border-radius: 16px 16px 0 0; }
  .active::before, .active::after { content: ''; position: absolute; bottom: 0; width: 16px; height: 16px; }
  .active::before { left: -16px; background: radial-gradient(circle at 0 0, transparent 16px, #35363a 16.500px); }
  .active::after { right: -16px; background: radial-gradient(circle at 100% 0, transparent 16px, #35363a 16.500px); }
  .title { flex: 1; margin-top: -2px; overflow: hidden; -webkit-mask-image: linear-gradient(90deg, #000 300px, transparent 352px); mask-image: linear-gradient(90deg, #000 300px, transparent 352px); }
  .close { width: 16px; height: 16px; }
  .sep { width: 2px; height: 40px; margin-top: 15px; background: #5a5b5e; }
  .plus { width: 24px; height: 24px; margin: 15px 0 0 31px; }
  .chev { width: 20px; height: 12px; margin: 15px 34px 0 auto; }
  .i32 { width: 32px; height: 32px; }

  /* toolbar */
  .toolbar { display: flex; align-items: center; gap: 32px; padding: 8px 0 0 28px; background: #35363a; flex: none; }
  .omnibox { display: flex; align-items: center; gap: 32px; box-sizing: border-box; width: 1992px; height: 68px; margin-left: -4px; padding: 0 20px; border-radius: 34px; background: #202124; }
  .url { flex: 1; margin-left: -16px; font-size: 27.500px; color: #fff; white-space: nowrap; }
  .url span { display: inline-block; }
  .path { color: #9a9b9e; }
  .first-ext { margin-left: -4px; }
  .ext { width: 32px; height: 32px; color: #fff; text-align: center; flex: none; }
  .m { border-radius: 50%; background: linear-gradient(#58c1a2, #4a9fc9); font-size: 24px; line-height: 28px; }
  .s { background: #888; font-size: 26px; line-height: 32px; }
  .avatar { width: 44px; height: 44px; margin: 0 -6px; border-radius: 50%; background: #3f6b28; color: #fff; font-size: 22px; line-height: 44px; text-align: center; }

  /* bookmarks */
  .bookmarks { display: flex; align-items: center; gap: 33.700px; height: 72px; padding: 0 36px 0 28px; background: #35363a; border-bottom: 2px solid #5c5c5f; flex: none; color: #fff; font-size: 23.500px; }
  .bookmarks div { display: flex; align-items: center; gap: 15.700px; }
  .bookmarks div span { margin-top: -1.500px; }
  .more { margin: -3px 0 0 auto; font-size: 26px; }

  /* page */
  .page { position: relative; flex: 1; overflow: hidden; }
  .hero { box-sizing: border-box; height: 128px; padding: 0 32px; background: #3662e3; color: #fff; display: flex; flex-direction: column; align-items: flex-start; }
  h1 { margin: -15px 0 0; font-size: 46px; line-height: 64px; font-weight: 450; }
  .hero p { margin: 0; font-size: 31px; line-height: 48px; }
  .lead { display: inline-block; margin: 33px 0 0 32px; font-size: 31px; line-height: 48px; color: #000; }
  .chart { width: 2000px; height: 1134px; margin: 47px 0 0 32px; }
  .shade { position: absolute; left: 0; right: 0; bottom: 0; height: 76px; background: linear-gradient(transparent, rgba(0, 0, 0, 0.1)); }

  /* select menu */
  .dropdown { position: absolute; left: 56px; top: 484px; box-sizing: border-box; width: 290px; height: 1184px; margin: 0; padding: 10px; list-style: none; border-radius: 13px; background: linear-gradient(#666664, #696763 40%, #646464 75%, #666664); box-shadow: inset 0 0 0 2px rgba(255, 255, 255, 0.18), 0 0 0 1px #111, 0 8px 36px rgba(0, 0, 0, 0.4); color: #f0f0f0; font-size: 30.500px; }
  li { position: relative; display: flex; align-items: center; box-sizing: border-box; height: 52px; padding: 0 0 4px 38px; border-radius: 8px; }
  li.on { background: #e8965c; color: #fff; font-weight: 500; }
  li svg { position: absolute; left: 8px; top: 17px; width: 20px; height: 20px; }
  .down { width: 18px; height: 12px; margin: 2px auto 0; }

  /* dock */
  .dock { position: absolute; left: 71px; top: 1684px; box-sizing: border-box; width: 2739px; height: 106px; padding: 14px 13px 0; display: flex; gap: 20.200px; border: 2px solid rgba(255, 255, 255, 0.17); border-radius: 34px; background: linear-gradient(90deg, #53443b, #584a3d 40%, #4c4037 46%, #282828 57%); background-clip: padding-box; box-shadow: 0 0 0 1px rgba(0, 0, 0, 0.6); }
  .slot { position: relative; width: 68px; height: 68px; flex: none; }
  .run::after { content: ''; position: absolute; left: 30px; top: 78px; width: 8px; height: 8px; border-radius: 50%; background: #d9cfc7; }
  .app { position: relative; width: 68px; height: 68px; border-radius: 16px; }
  .app svg { width: 68px; height: 68px; }
  .b-finder { background: linear-gradient(#62c2f5, #3b6de8); overflow: hidden; }
  .b-launch { box-sizing: border-box; background: #c2bdb9; display: grid; grid-template-columns: repeat(3, 13px); gap: 3.500px; padding: 11px; }
  .b-launch i { height: 13px; border-radius: 3px; }
  .b-mail { background: linear-gradient(#346be4, #5bbcf7); }
  .b-viber { background: linear-gradient(160deg, #9b85f4, #6650dd); }
  .b-cal { background: #f6f4f1; overflow: hidden; text-align: center; }
  .month { height: 21px; background: #e2584c; color: #fff; font-size: 15px; line-height: 22px; font-weight: 500; }
  .day { font-size: 41px; line-height: 44px; font-weight: 300; color: #222; letter-spacing: -2px; }
  .b-chess { background: #111; }
  .board { position: absolute; left: 7px; top: 7px; width: 54px; height: 54px; background: repeating-conic-gradient(#e9e9e9 0 25%, #151515 0 50%) 0 0 / 13.500px 13.500px; }
  .b-chess .over { position: absolute; left: 0; top: 0; }
  .b-signal { background: #4573e8; overflow: hidden; }
  .b-zoom { background: linear-gradient(200deg, #3f7cf5, #1d50e0); color: #fff; font-size: 19.500px; font-weight: 500; line-height: 65px; text-align: center; }
  .b-set { background: linear-gradient(#d8e0e6, #8b8b88); }
  .b-stick { background: #d6c765; overflow: hidden; }
  .b-note { background: linear-gradient(#eed65c, #d8b93e); overflow: hidden; }
  .b-white { background: linear-gradient(#fefefe, #f3f3f2); overflow: hidden; }
  .logo58 { padding: 4.500px; }
  .logo58 :global(svg) { width: 59px; height: 59px; }
  .b-notes { background: linear-gradient(#fad968, #f5c436 17px, #f2f1ef 17px, #e3e2dd); overflow: hidden; }
  .b-qt { background: linear-gradient(#4c5157, #050505); }
  .b-anki { background: linear-gradient(160deg, #8a8a8a, #222 50%, #777); overflow: hidden; }
  .b-store { background: linear-gradient(#54b5f0, #2558d8); }
  .b-haz { background: #e99740; overflow: hidden; }
  .b-green { background: linear-gradient(#85ef80, #55bb44); }
  .badge { position: absolute; right: -10px; top: -8px; width: 32px; height: 32px; border-radius: 50%; background: #e04a3d; color: #fff; font-size: 20px; line-height: 32px; text-align: center; font-weight: 400; }
  .bar { width: 2px; height: 78px; margin: -2px 7px 0 11px; background: #66625f; }
  .bar.last { margin-right: 2px; }
  .mini { position: relative; width: 78px; height: 44px; margin-top: 13px; }
  .mini > svg { width: 78px; height: 44px; }
  .tiny { position: absolute; right: 1px; top: 34px; width: 25px; height: 25px; box-sizing: border-box; padding: 2px; border-radius: 6px; background: #fff; }
  .tiny :global(svg) { width: 21px; height: 21px; }
  .trash { width: 60px; height: 78px; margin: -5px 0 0 -1px; }
</style>
